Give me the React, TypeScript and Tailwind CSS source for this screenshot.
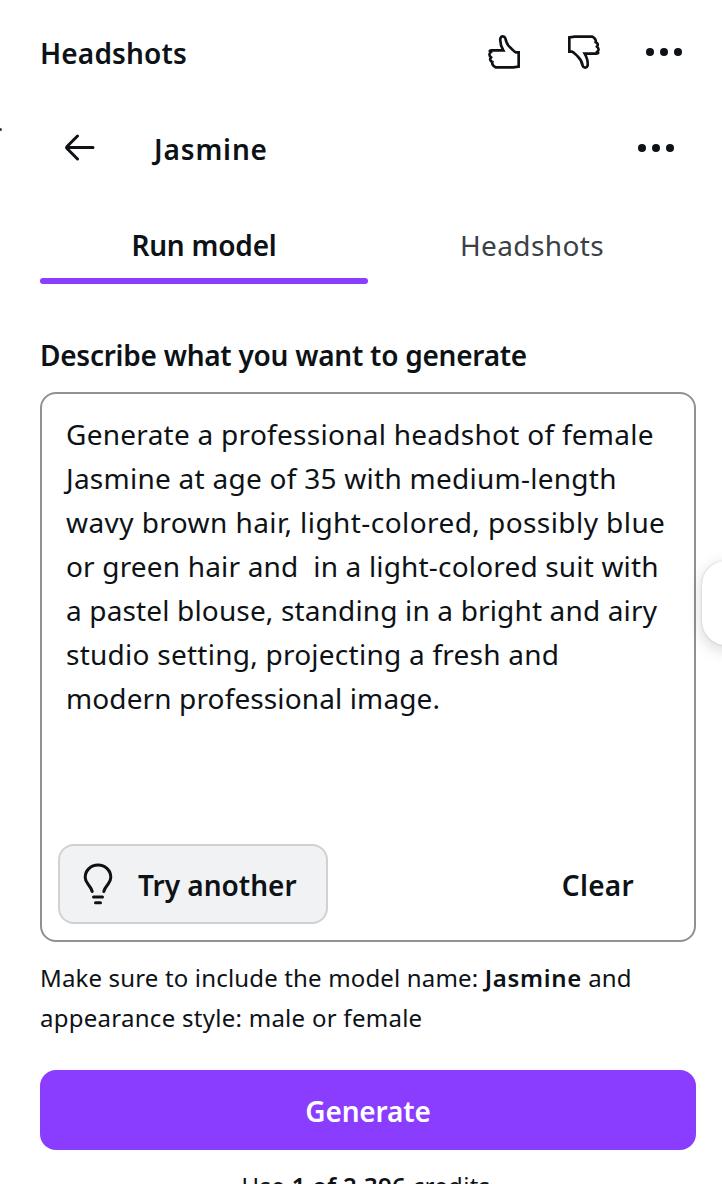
function ThumbIcon({ className = "" }: { className?: string }) {
  return (
    <svg viewBox="48 36 108 114" className={`h-[38px] w-9 shrink-0 ${className}`} fill="none" stroke="#0d1216" strokeWidth="8" strokeLinejoin="miter" strokeLinecap="butt">
      <path d="M138 94H146V137L130 139H77C70 135 65 130 67 123C60 119 59 114 63 109C57 104 57 98 62 94C57 90 59 88 65 88H100C93 76 90 62 91 53C93 44 103 44 106 52C108 63 111 71 120 79C128 86 133 93 138 94Z" />
    </svg>
  );
}

function MoreIcon() {
  return (
    <svg viewBox="0 0 36 8" className="h-2 w-9 shrink-0" fill="#0d1216">
      <circle cx="4" cy="4" r="4" />
      <circle cx="18" cy="4" r="4" />
      <circle cx="32" cy="4" r="4" />
    </svg>
  );
}

function BackIcon() {
  return (
    <svg viewBox="0 0 32 28" className="h-7 w-8 shrink-0" fill="none" stroke="#0d1216" strokeWidth="3" strokeLinecap="round" strokeLinejoin="round">
      <path d="M29 13.5H3M13.500 2L3.3 12.2Q2 13.5 3.3 14.8L13.500 25" />
    </svg>
  );
}

function BulbIcon() {
  return (
    <svg viewBox="0 0 30 42" className="h-[42px] w-[30px] shrink-0" fill="none" stroke="#0d1216" strokeWidth="3" strokeLinecap="round">
      <path d="M9.2 28.5C8 24.500 6.8 23.5 5 21.2C3 18.7 2.2 16.7 2.2 14.2C2.2 7.5 7.7 2 15 2S27.8 7.5 27.8 14.2C27.8 16.7 27 18.7 25 21.2C23.2 23.5 22 24.500 20.8 28.5" />
      <path d="M10.5 34H19.5M12.5 39.8H17.5" />
    </svg>
  );
}

const promptLines = [
  { text: "Generate a professional headshot of female", tracking: "tracking-[0.27px]" },
  { text: "Jasmine at age of 35 with medium-length", tracking: "tracking-[0.26px]" },
  { text: "wavy brown hair, light-colored, possibly blue", tracking: "tracking-[0.43px]" },
  { text: "or green hair and  in a light-colored suit with", tracking: "tracking-[0.17px]" },
  { text: "a pastel blouse, standing in a bright and airy", tracking: "tracking-[0.15px]" },
  { text: "studio setting, projecting a fresh and", tracking: "tracking-[0.25px]" },
  { text: "modern professional image.", tracking: "tracking-[0.12px]" },
];

export default function App() {
  return (
    <div className="relative h-[1184px] w-[722px] overflow-hidden bg-white pr-[26px] pl-10 font-['Noto_Sans',sans-serif] text-[28px] text-[#0d1216]">
      <header className="flex h-[104px] items-center pr-[14px]">
        <h1 className="flex-1 pt-px font-semibold tracking-[0.15px]">Headshots</h1>
        <div className="flex items-center gap-11">
          <button aria-label="Like"><ThumbIcon /></button>
          <button aria-label="Dislike"><ThumbIcon className="rotate-180" /></button>
          <button aria-label="More options"><MoreIcon /></button>
        </div>
      </header>

      <div className="flex h-[88px] items-center pr-[22px] pl-6">
        <button aria-label="Back"><BackIcon /></button>
        <h2 className="ml-[58px] flex-1 pt-px font-semibold tracking-[0.85px]">Jasmine</h2>
        <button aria-label="Model options"><MoreIcon /></button>
      </div>

      <div className="mt-3 grid h-20 grid-cols-2 pt-px text-center leading-[80px]">
        <button className="font-semibold tracking-[-0.2px]">Run model</button>
        <button className="tracking-[0.4px] text-[#3b4046]">Headshots</button>
      </div>
      <div className="-mt-[6px] h-[6px] w-[328px] rounded-full bg-[#8b3dff]" />

      <label className="mt-[51px] block h-10 font-semibold leading-10 tracking-[-0.26px]">Describe what you want to generate</label>

      <div className="mt-[17px] flex h-[550px] flex-col rounded-2xl border-2 border-[#8d9297] px-4 pt-[18px] pb-4">
        <div className="flex-1 pl-2 leading-[44px] whitespace-pre">
          {promptLines.map((line) => (
            <div key={line.text} className={line.tracking}>{line.text}</div>
          ))}
        </div>
        <div className="flex h-20 items-center justify-between font-semibold">
          <button className="flex h-20 w-[270px] items-center rounded-2xl border-2 border-[#cfd1d4] bg-[#f1f2f4] pl-[23px]">
            <BulbIcon />
            <span className="ml-[25px] pt-px">Try another</span>
          </button>
          <button className="mr-11 pt-px tracking-[0.3px]">Clear</button>
        </div>
      </div>

      <p className="mt-4 text-[24px] leading-10 whitespace-nowrap">
        <span className="tracking-[0.16px]">Make sure to include the model name: </span>
        <strong className="font-semibold tracking-[0.7px]">Jasmine</strong>
        <span> and</span>
        <br />
        <span className="tracking-[0.27px]">appearance style: male or female</span>
      </p>

      <button className="mt-8 flex h-20 w-full items-center justify-center rounded-2xl bg-[#8b3dff] pt-px font-semibold tracking-[-0.15px] text-white">Generate</button>
      <p className="mt-4 pr-[4px] text-center text-[24px] leading-10 tracking-[0.3px]">
        Use <strong className="font-semibold">1 of 2,396</strong> credits
      </p>

      <div className="absolute top-[561px] left-[702px] h-[84px] w-20 rounded-[24px] bg-white shadow-[0_4px_16px_rgba(13,18,22,0.18),0_0_2px_rgba(13,18,22,0.2)]" />
      <div className="absolute top-[128px] -left-px h-[3px] w-[3px] rounded-full bg-[#3b4046]" />
    </div>
  );
}
